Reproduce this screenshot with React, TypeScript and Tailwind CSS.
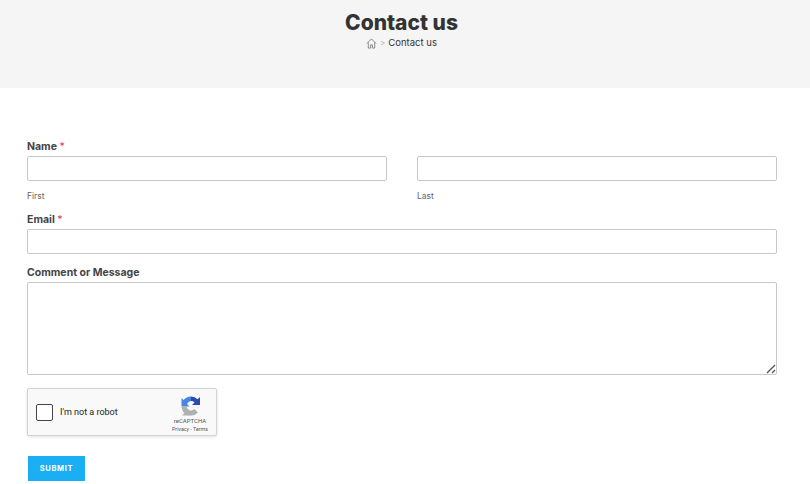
const poppins = "font-['Inter','Noto_Sans',sans-serif]";

function RecaptchaLogo() {
  return (
    <svg className="ml-[2px]" width="20" height="20" viewBox="0 0 20 20" fill="none">
      <path d="M10 0.5a9.4 9.4 0 0 1 6.6 2.7L19 1v8h-8l2.6-2.6A5 5 0 0 0 10 5z" fill="#2b4bb0" />
      <path d="M10 0.5A9.5 9.5 0 0 0 2.6 4L0.5 2v8.5h8L6 8a5 5 0 0 1 4-3z" fill="#4a86e0" />
      <path d="M0.5 10.5h5a4.8 4.8 0 0 0 8 2.6l3.4 3.4A9.5 9.5 0 0 1 0.5 10.5z" fill="#b0b0b0" />
      <path d="M1 19.5l4-4 4 4z" fill="#b0b0b0" />
    </svg>
  );
}

export default function App() {
  return (
    <div className={`w-[810px] h-[484px] overflow-hidden bg-white ${poppins}`}>
      <div className="h-[88px] bg-[#f5f5f5] flex flex-col items-center pt-[10px] pr-[7px]">
        <h1 className="text-[21px] leading-[26px] font-extrabold text-[#333]">Contact us</h1>
        <div className="flex items-center mt-[0px] text-[9.5px] leading-[14px] text-[#333]">
          <svg width="11" height="11" viewBox="0 0 24 24" fill="none" stroke="#666" strokeWidth="1.6" strokeLinejoin="round">
            <path d="M2 12 12 2l10 10M5 9.5V22h5v-7h4v7h5V9.5" />
          </svg>
          <span className="mx-[3px] text-[#aaa] text-[8px]">&gt;</span>
          <span>Contact us</span>
        </div>
      </div>

      <form className="pl-[27px] pr-[33px] pt-[52px]">
        <div className="text-[10.5px] leading-[14px] font-bold text-[#444]">
          Name <span className="text-[#e53935] font-normal">*</span>
        </div>
        <div className="grid grid-cols-2 gap-[30px] mt-[2px]">
          <div>
            <input className="block w-full h-[25px] border border-[#c8c8c8] rounded-[2px] bg-white" />
            <div className="mt-[9px] text-[8.5px] leading-[12px] text-[#666]">First</div>
          </div>
          <div>
            <input className="block w-full h-[25px] border border-[#c8c8c8] rounded-[2px] bg-white" />
            <div className="mt-[9px] text-[8.5px] leading-[12px] text-[#666]">Last</div>
          </div>
        </div>

        <div className="mt-[11px] text-[10.5px] leading-[14px] font-bold text-[#444]">
          Email <span className="text-[#e53935] font-normal">*</span>
        </div>
        <input className="block w-full h-[25px] mt-[2px] border border-[#c8c8c8] rounded-[2px] bg-white" />

        <div className="mt-[12px] text-[10.5px] leading-[14px] font-bold text-[#444]">Comment or Message</div>
        <div className="relative mt-[2px]">
          <textarea className="block w-full h-[93px] resize-none border border-[#c8c8c8] rounded-[2px] bg-white" />
          <svg className="absolute right-[1px] bottom-[1px]" width="10" height="10" viewBox="0 0 10 10" fill="none" stroke="#555" strokeWidth="1.4">
            <path d="M1 9 9 1M6 9l3-3" />
          </svg>
        </div>

        <div className="w-[190px] h-[48px] mt-[13px] border border-[#d3d3d3] rounded-[2px] bg-[#f9f9f9] shadow-[0_1px_3px_rgba(0,0,0,0.12)] flex items-center pl-[8px] pr-[8px] font-['Roboto',sans-serif]">
          <div className="w-[17px] h-[17px] border-[1.5px] border-[#444] rounded-[2px] bg-white" />
          <span className="ml-[7px] mt-[2px] text-[9px] text-[#222]">I'm not a robot</span>
          <div className="ml-auto flex flex-col items-center pt-[5px]">
            <RecaptchaLogo />
            <div className="mt-[1px] text-[6px] leading-[8px] text-[#555]">reCAPTCHA</div>
            <div className="text-[5.3px] leading-[8px] text-[#555]">Privacy - Terms</div>
          </div>
        </div>

        <button type="button" className="block ml-[1px] mt-[20px] w-[57px] h-[25px] bg-[#1aaef2] text-white text-[7.5px] font-bold tracking-[0.7px]">
          SUBMIT
        </button>
      </form>
    </div>
  );
}
